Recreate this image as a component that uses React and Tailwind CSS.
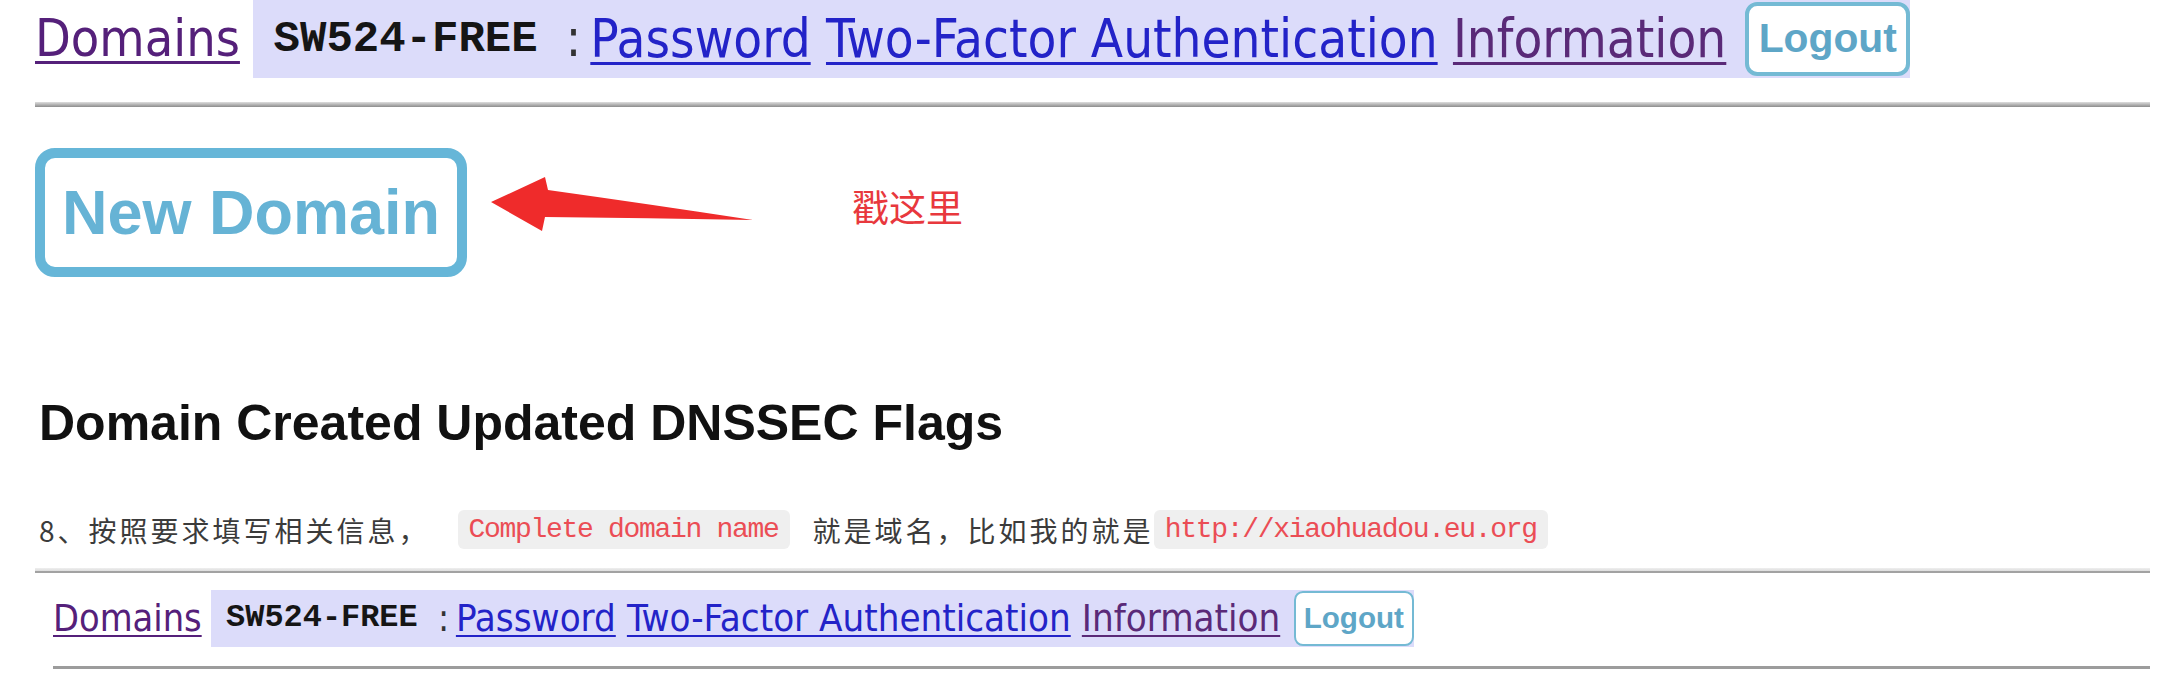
import React from "react";

const navFont =
  "font-['DejaVu_Sans_Condensed','DejaVu_Sans',sans-serif] [font-stretch:condensed]";

const linkBase =
  "text-[1.03em] underline underline-offset-[0.1em] [text-decoration-thickness:0.05em]";

const Nav = ({ className }) => {
  return (
    <div className={`flex items-center h-[1.53em] ${navFont} ${className}`}>
      <a className="text-[1.015em] text-[#55207a] underline underline-offset-[0.1em] [text-decoration-thickness:0.05em]">
        Domains
      </a>
      <div className="ml-[0.25em] h-full flex items-center bg-[#dcdcfa] pl-[0.41em]">
        <span className="font-bold text-[0.863em] text-[#151515] font-['Liberation_Mono',monospace] [font-stretch:normal]">
          SW524-FREE
        </span>
        <span className="ml-[0.55em] mr-[0.18em] text-[#333]">:</span>
        <div className="flex gap-[0.3em]">
          <a className={`${linkBase} text-[#2323c8]`}>Password</a>
          <a className={`${linkBase} text-[#2323c8]`}>Two-Factor Authentication</a>
          <a className={`${linkBase} text-[#5a2a78]`}>Information</a>
        </div>
        <div className="ml-[0.37em] w-[3.24em] h-[1.47em] border-[0.08em] border-[#74bad4] rounded-[0.24em] bg-white flex items-center justify-center">
          <span className="text-[0.8em] font-bold text-[#5ea6c7] font-['Liberation_Sans',sans-serif] [font-stretch:normal]">
            Logout
          </span>
        </div>
      </div>
    </div>
  );
};

const Arrow = () => (
  <svg width="270" height="60" viewBox="0 0 270 60" className="ml-[21px] mt-[26px] shrink-0">
    <path
      d="M3 28 L57 3 L60 16 Q160 30 265 46 Q160 44 57 43 L54 57 Z"
      fill="#ef2b2b"
    />
  </svg>
);

const App = () => {
  return (
    <div className="w-[2172px] h-[687px] overflow-hidden bg-white font-['Liberation_Sans',sans-serif]">
      {/* first screenshot */}
      <Nav className="ml-[35px] text-[51px]" />
      <div className="mt-[24px] ml-[35px] mr-[22px] h-[5px] bg-[linear-gradient(#dedede,#8c8c8c)]" />

      <div className="mt-[41px] ml-[35px] flex items-start">
        <div className="w-[432px] h-[129px] border-[10px] border-[#66b6d8] rounded-[20px] flex items-center justify-center">
          <span className="text-[63px] font-bold text-[#66b3d5] leading-none">New Domain</span>
        </div>
        <Arrow />
        <span className="ml-[94px] mt-[40px] text-[37px] leading-none text-[#e8383d] font-['Noto_Sans_CJK_SC',sans-serif]">
          戳这里
        </span>
      </div>

      <h2 className="mt-[121px] ml-[39px] text-[50px] leading-none font-bold text-[#111]">
        Domain Created Updated DNSSEC Flags
      </h2>

      {/* article text */}
      <div className="mt-[62px] ml-[39px] h-[39px] flex items-center text-[28px] text-[#3b3b3b] font-['Noto_Sans_CJK_SC',sans-serif]">
        <span className="tracking-[3px]">8、按照要求填写相关信息，</span>
        <code className="ml-[28px] h-[39px] px-[11px] flex items-center rounded-[6px] bg-[#efefef] text-[#eb4d55] text-[28px] tracking-[-1.3px] font-['Liberation_Mono',monospace]">
          Complete domain name
        </code>
        <span className="ml-[23px] tracking-[3px]">就是域名，比如我的就是</span>
        <code className="h-[39px] px-[11px] flex items-center rounded-[6px] bg-[#efefef] text-[#eb4d55] text-[28px] tracking-[-1.3px] font-['Liberation_Mono',monospace]">
          http://xiaohuadou.eu.org
        </code>
      </div>

      {/* second screenshot */}
      <div className="mt-[19px] ml-[35px] mr-[22px] h-[5px] bg-[linear-gradient(#efefef,#dcdcdc)] border-b-2 border-[#a2a2a2]" />
      <Nav className="mt-[17px] ml-[53px] text-[37px]" />
      <div className="mt-[19px] ml-[53px] mr-[22px] h-[3px] bg-[#9c9c9c]" />
    </div>
  );
};

export default App;
